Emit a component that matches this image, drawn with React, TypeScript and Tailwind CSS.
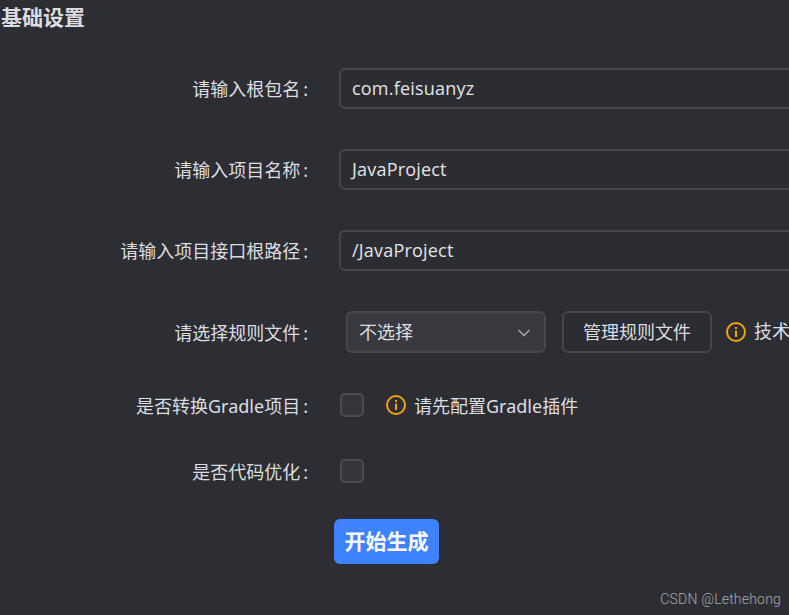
import { ChevronDown } from "lucide-react";

const font = "font-['Noto_Sans','Noto_Sans_CJK_SC',sans-serif]";

function InfoIcon() {
  return (
    <svg width="20" height="20" viewBox="0 0 20 20" fill="none" className="shrink-0">
      <circle cx="10" cy="10" r="9" stroke="#f0a30a" strokeWidth="2" />
      <rect x="9" y="8.5" width="2" height="6.5" fill="#f0a30a" />
      <rect x="9" y="5" width="2" height="2" fill="#f0a30a" />
    </svg>
  );
}

function Label({ children, low }: { children: string; low?: boolean }) {
  return (
    <label className={`w-[308px] shrink-0 text-right text-[18px] leading-[28px] text-[#dcdde0] ${low ? "pt-[2px]" : ""}`}>
      {children}
      <span className="ml-[3px]">:</span>
    </label>
  );
}

function TextRow({ label, value }: { label: string; value: string }) {
  return (
    <div className="flex h-[41px] items-center">
      <Label>{label}</Label>
      <div className="ml-[31px] flex h-[41px] w-[520px] shrink-0 items-center rounded-md border-2 border-[#46474d] bg-[#2c2d32] px-[11px] font-['Open_Sans','Noto_Sans_CJK_SC',sans-serif] text-[18px] tracking-[0.2px] text-[#e3e4e6]">
        {value}
      </div>
    </div>
  );
}

function Checkbox() {
  return <span className="ml-[32px] block h-6 w-6 shrink-0 rounded-[5px] border-2 border-[#4b4c52] bg-[#35363b]" />;
}

export default function App() {
  return (
    <div className={`relative h-[615px] w-[789px] overflow-hidden bg-[#2d2e33] ${font}`}>
      <h2 className="h-[68px] pt-[3px] pl-[1px] text-[21px] leading-[28px] font-bold text-[#dcdde0]">基础设置</h2>

      <div className="flex flex-col gap-10">
        <TextRow label="请输入根包名" value="com.feisuanyz" />
        <TextRow label="请输入项目名称" value="JavaProject" />
        <TextRow label="请输入项目接口根路径" value="/JavaProject" />

        <div className="flex h-[41px] items-center">
          <Label low>请选择规则文件</Label>
          <div className="ml-[38px] flex h-[42px] w-[200px] shrink-0 items-center justify-between rounded-md border-2 border-[#46474d] bg-[#393a40] pt-[2px] pr-[10px] pl-[11px] text-[18px] text-[#dcdde0]">
            不选择
            <ChevronDown className="h-5 w-5 text-[#a5a6aa]" />
          </div>
          <button className="ml-[16px] h-[42px] w-[150px] shrink-0 rounded-md border-2 border-[#46474d] bg-[#2c2d32] pt-[2px] text-[18px] text-[#dcdde0]">
            管理规则文件
          </button>
          <span className="ml-[14px]">
            <InfoIcon />
          </span>
          <span className="ml-2 shrink-0 text-[18px] text-[#dcdde0]">技术</span>
        </div>
      </div>

      <div className="mt-[41px] flex h-6 items-center">
        <Label low>是否转换Gradle项目</Label>
        <Checkbox />
        <span className="ml-[22px]">
          <InfoIcon />
        </span>
        <span className="ml-2 pt-[2px] text-[18px] text-[#dcdde0]">请先配置Gradle插件</span>
      </div>

      <div className="mt-[42px] flex h-6 items-center">
        <Label low>是否代码优化</Label>
        <Checkbox />
      </div>

      <button className="mt-[36px] ml-[334px] block h-[45px] w-[105px] rounded-md bg-[#3f82ff] text-[21px] font-bold text-white">
        开始生成
      </button>

      <span className="absolute right-[8px] bottom-[5px] font-['Roboto',sans-serif] text-[14px] font-light tracking-[0.2px] text-[#a9aaad]">CSDN @Lethehong</span>
    </div>
  );
}
